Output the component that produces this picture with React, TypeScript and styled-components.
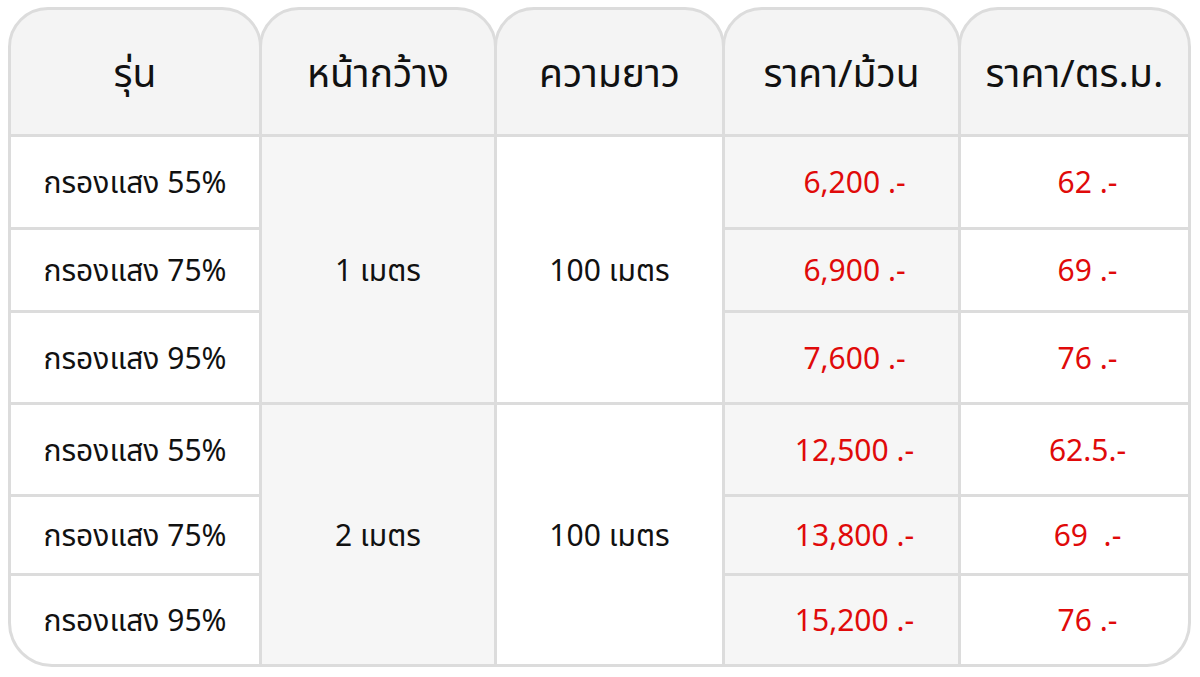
import { FC } from "react";
import styled, { createGlobalStyle } from "styled-components";

const GlobalStyle = createGlobalStyle`
    html, body {
        margin: 0;
        padding: 0;
        background: #ffffff;
    }
    body {
        font-family: "Noto Sans Thai", Tahoma, "Leelawadee UI", "Noto Sans", "DejaVu Sans", sans-serif;
        color: #111111;
    }
`;

const LINE = "#dcdcdc";
const COLUMNS = "248px 232px 225px 233px 227px";

const Page = styled.div`
    padding: 7px 0 0 8px;
`;

const Table = styled.div`
    width: 1183px;
    display: flex;
    flex-direction: column;
`;

const HeaderRow = styled.div`
    display: grid;
    grid-template-columns: ${COLUMNS};
    column-gap: 3px;
    padding: 0 3px;
`;

const HeaderCell = styled.div`
    margin: 0 -3px;
    height: 130px;
    box-sizing: border-box;
    border: 3px solid ${LINE};
    border-radius: 40px 40px 0 0;
    background: #f4f4f4;
    display: flex;
    align-items: center;
    justify-content: center;
    font-size: 39px;
    padding-top: 6px;
`;

const Body = styled.div`
    display: grid;
    grid-template-columns: ${COLUMNS};
    grid-template-rows: 90px 80px 89px 89px 76px 88px;
    gap: 3px;
    padding: 0 3px 3px 3px;
    background: ${LINE};
    border-radius: 0 0 44px 44px;
    overflow: hidden;
`;

const Cell = styled.div<{ $shade?: boolean; $span?: number; $corner?: "left" | "right" }>`
    grid-row: ${({ $span }) => ($span ? `span ${$span}` : "auto")};
    background: ${({ $shade }) => ($shade ? "#f6f6f6" : "#ffffff")};
    display: flex;
    align-items: center;
    justify-content: center;
    font-size: 30px;
    padding-top: 4px;
    border-bottom-left-radius: ${({ $corner }) => ($corner === "left" ? "41px" : "0")};
    border-bottom-right-radius: ${({ $corner }) => ($corner === "right" ? "41px" : "0")};
`;

const Price = styled(Cell)`
    color: #e00a0a;
    padding-left: 26px;
    white-space: pre;
`;

type Row = { model: string; roll: string; sqm: string };

const groups: { width: string; length: string; rows: Row[] }[] = [
    {
        width: "1 เมตร",
        length: "100 เมตร",
        rows: [
            { model: "กรองแสง 55%", roll: "6,200 .-", sqm: "62 .-" },
            { model: "กรองแสง 75%", roll: "6,900 .-", sqm: "69 .-" },
            { model: "กรองแสง 95%", roll: "7,600 .-", sqm: "76 .-" },
        ],
    },
    {
        width: "2 เมตร",
        length: "100 เมตร",
        rows: [
            { model: "กรองแสง 55%", roll: "12,500 .-", sqm: "62.5.-" },
            { model: "กรองแสง 75%", roll: "13,800 .-", sqm: "69  .-" },
            { model: "กรองแสง 95%", roll: "15,200 .-", sqm: "76 .-" },
        ],
    },
];

const headers = ["รุ่น", "หน้ากว้าง", "ความยาว", "ราคา/ม้วน", "ราคา/ตร.ม."];

const App: FC = () => {
    return (
        <Page>
            <GlobalStyle />
            <Table>
                <HeaderRow>
                    {headers.map((h) => (
                        <HeaderCell key={h}>{h}</HeaderCell>
                    ))}
                </HeaderRow>
                <Body>
                    {groups.map((g, gi) =>
                        g.rows.map((r, ri) => {
                            const last = gi === groups.length - 1 && ri === g.rows.length - 1;
                            return [
                                <Cell key={`m${gi}${ri}`} $corner={last ? "left" : undefined}>{r.model}</Cell>,
                                ri === 0 && <Cell key={`w${gi}`} $shade $span={3}>{g.width}</Cell>,
                                ri === 0 && <Cell key={`l${gi}`} $span={3}>{g.length}</Cell>,
                                <Price key={`p${gi}${ri}`} $shade>{r.roll}</Price>,
                                <Price key={`s${gi}${ri}`} $corner={last ? "right" : undefined}>{r.sqm}</Price>,
                            ];
                        })
                    )}
                </Body>
            </Table>
        </Page>
    );
};

export default App;
